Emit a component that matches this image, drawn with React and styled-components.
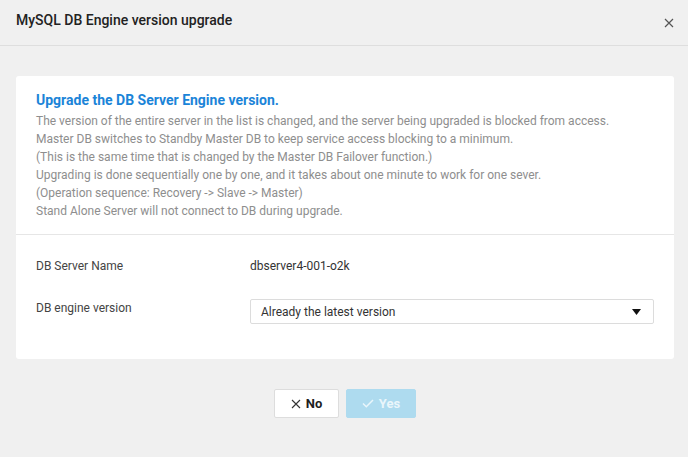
import React from "react";
import styled, { createGlobalStyle } from "styled-components";

const Global = createGlobalStyle`
  html, body { margin: 0; padding: 0; background: #f0f0f0; }
  body { font-family: Roboto, "Liberation Sans", Arial, sans-serif; }
  * { box-sizing: border-box; }
`;

const Dialog = styled.div`
  width: 688px;
  height: 457px;
  background: #f0f0f0;
  display: flex;
  flex-direction: column;
`;

const Header = styled.div`
  height: 46px;
  border-bottom: 1px solid #dedede;
  display: flex;
  align-items: center;
  justify-content: space-between;
  padding: 0 12px 0 16px;
`;

const Title = styled.h1`
  margin: 0 0 6px 0;
  font-size: 14px;
  font-weight: 500;
  color: #222;
  line-height: 18px;
`;

const CloseButton = styled.button`
  border: 0;
  background: transparent;
  padding: 0;
  width: 14px;
  height: 14px;
  display: flex;
  align-items: center;
  justify-content: center;
  cursor: pointer;
  margin-top: 0;
`;

const Body = styled.div`
  padding: 30px 14px 0 16px;
  display: flex;
  flex-direction: column;
`;

const Card = styled.div`
  background: #fff;
  border-radius: 3px;
  width: 658px;
`;

const Intro = styled.div`
  padding: 15px 20px 14px 20px;
  border-bottom: 1px solid #e6e6e6;
`;

const IntroTitle = styled.h2`
  margin: 0 0 3px 0;
  font-size: 14px;
  font-weight: 700;
  color: #1b84d8;
  line-height: 18px;
`;

const IntroText = styled.p`
  margin: 0;
  font-size: 12px;
  line-height: 18px;
  color: #8e8e8e;
`;

const Form = styled.div`
  padding: 19px 20px 35px 20px;
  display: flex;
  flex-direction: column;
  gap: 21px;
`;

const Row = styled.div`
  display: flex;
  align-items: ${(p) => (p.$top ? "flex-start" : "center")};
  min-height: ${(p) => (p.$top ? "25px" : "24px")};
`;

const Label = styled.div`
  width: 214px;
  flex: none;
  font-size: 12px;
  line-height: 18px;
  color: #444;
`;

const Value = styled.div`
  font-size: 12px;
  line-height: 18px;
  color: #333;
`;

const Select = styled.div`
  flex: 1;
  height: 25px;
  border: 1px solid #dcdcdc;
  border-radius: 2px;
  display: flex;
  align-items: center;
  justify-content: space-between;
  padding: 0 12px 0 10px;
  font-size: 12px;
  color: #333;
`;

const Footer = styled.div`
  display: flex;
  justify-content: center;
  gap: 7px;
  padding-top: 30px;
`;

const Button = styled.button`
  height: 29px;
  width: ${(p) => p.$w}px;
  display: flex;
  align-items: center;
  justify-content: center;
  gap: 5px;
  font-family: Roboto, "Liberation Sans", Arial, sans-serif;
  font-size: 13px;
  font-weight: 700;
  border-radius: 2px;
  padding: 0;
  cursor: pointer;
  border: 1px solid ${(p) => (p.$primary ? "#aedbef" : "#dddddd")};
  background: ${(p) => (p.$primary ? "#aedbef" : "#ffffff")};
  color: ${(p) => (p.$primary ? "#eaf6fb" : "#1e1e1e")};
`;

const lines = [
  "The version of the entire server in the list is changed, and the server being upgraded is blocked from access.",
  "Master DB switches to Standby Master DB to keep service access blocking to a minimum.",
  "(This is the same time that is changed by the Master DB Failover function.)",
  "Upgrading is done sequentially one by one, and it takes about one minute to work for one sever.",
  "(Operation sequence: Recovery -> Slave -> Master)",
  "Stand Alone Server will not connect to DB during upgrade.",
];

export default function App() {
  return (
    <>
      <Global />
      <Dialog>
        <Header>
          <Title>MySQL DB Engine version upgrade</Title>
          <CloseButton aria-label="close">
            <svg width="10" height="10" viewBox="0 0 10 10">
              <path d="M1 1L9 9M9 1L1 9" stroke="#555" strokeWidth="1.2" />
            </svg>
          </CloseButton>
        </Header>
        <Body>
          <Card>
            <Intro>
              <IntroTitle>Upgrade the DB Server Engine version.</IntroTitle>
              {lines.map((l) => (
                <IntroText key={l}>{l}</IntroText>
              ))}
            </Intro>
            <Form>
              <Row>
                <Label>DB Server Name</Label>
                <Value>dbserver4-001-o2k</Value>
              </Row>
              <Row $top>
                <Label>DB engine version</Label>
                <Select>
                  <span>Already the latest version</span>
                  <svg width="9" height="6" viewBox="0 0 9 6">
                    <path d="M0 0H9L4.5 6Z" fill="#111" />
                  </svg>
                </Select>
              </Row>
            </Form>
          </Card>
          <Footer>
            <Button $w={65}>
              <svg width="10" height="10" viewBox="0 0 10 10">
                <path d="M1 1L9 9M9 1L1 9" stroke="#333" strokeWidth="1.1" />
              </svg>
              No
            </Button>
            <Button $w={70} $primary>
              <svg width="12" height="9" viewBox="0 0 12 9">
                <path d="M1 4.5L4.3 7.8L11 1" stroke="#eaf6fb" strokeWidth="1.5" fill="none" />
              </svg>
              Yes
            </Button>
          </Footer>
        </Body>
      </Dialog>
    </>
  );
}
